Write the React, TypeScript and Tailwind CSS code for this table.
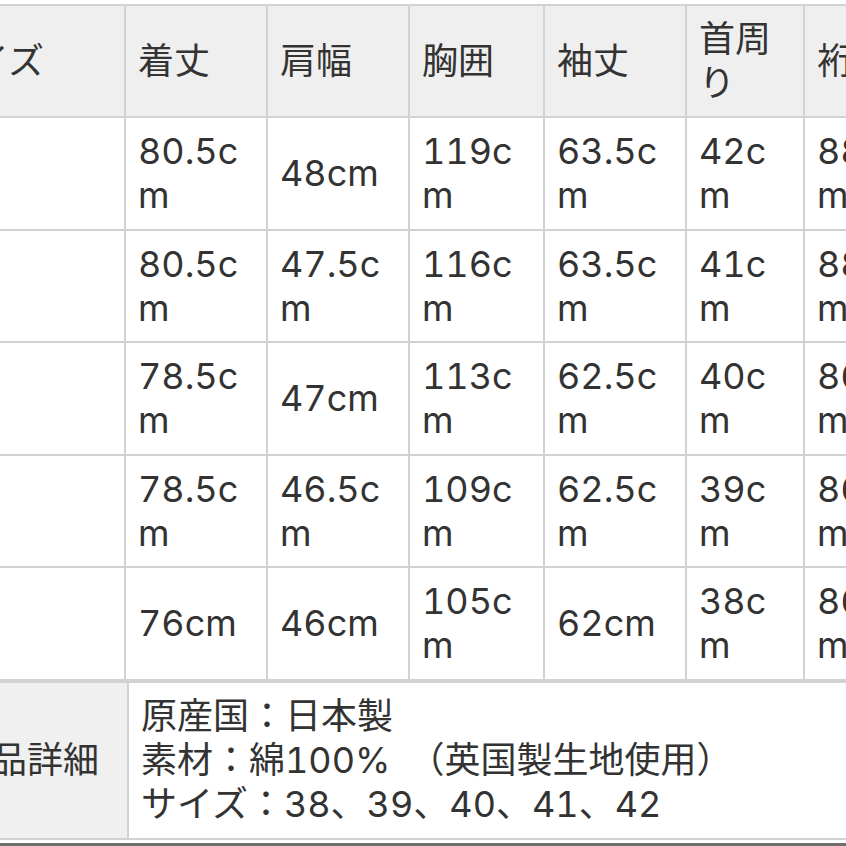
const headers = ['サイズ', '着丈', '肩幅', '胸囲', '袖丈', '首周り', '裄丈'];

const rows = [
  ['42', '80.5cm', '48cm', '119cm', '63.5cm', '42cm', '88cm'],
  ['41', '80.5cm', '47.5cm', '116cm', '63.5cm', '41cm', '88cm'],
  ['40', '78.5cm', '47cm', '113cm', '62.5cm', '40cm', '86cm'],
  ['39', '78.5cm', '46.5cm', '109cm', '62.5cm', '39cm', '86cm'],
  ['38', '76cm', '46cm', '105cm', '62cm', '38cm', '86cm'],
];

const details = [
  '原産国：日本製',
  '素材：綿100%　（英国製生地使用）',
  'サイズ：38、39、40、41、42',
];

const cell = 'flex items-center pr-4 break-all';

export default function App() {
  return (
    <div className="w-[846px] h-[846px] overflow-hidden bg-white text-[#333] text-[36px] leading-[44px] tabular-nums font-[Inter,'Noto_Sans_CJK_JP',sans-serif]">
      {/* size table */}
      <div className="grid w-max ml-[-82px] mt-[4px] p-[2px] gap-[2px] bg-[#d2d2d2] grid-cols-[204px_140px_140px_133px_140px_116px_116px] grid-rows-[110px_repeat(5,110.5px)]">
        {headers.map((h, i) => (
          <div key={h} className={`${cell} ${i === 0 ? 'pl-[17px]' : 'pl-3'} bg-[#efefef]`}>{h}</div>
        ))}
        {rows.map(r =>
          r.map((v, i) => (
            <div key={r[0] + '-' + i} className={`${cell} ${i === 0 ? 'pl-[17px]' : 'pl-3'} bg-white`}>{v}</div>
          ))
        )}
      </div>

      {/* product details */}
      <div className="grid w-max ml-[-82px] p-[2px] gap-[2px] bg-[#d2d2d2] grid-cols-[207px_800px] grid-rows-[155.5px]">
        <div className="flex items-center pl-[35px] bg-[#f0f0f0]">商品詳細</div>
        <div className="flex flex-col justify-center pl-3 bg-white">
          {details.map(d => (
            <div key={d} className="whitespace-pre">{d}</div>
          ))}
        </div>
      </div>
      <div className="mt-[3px] h-[3px] bg-[#6e6e6e]" />
    </div>
  );
}
